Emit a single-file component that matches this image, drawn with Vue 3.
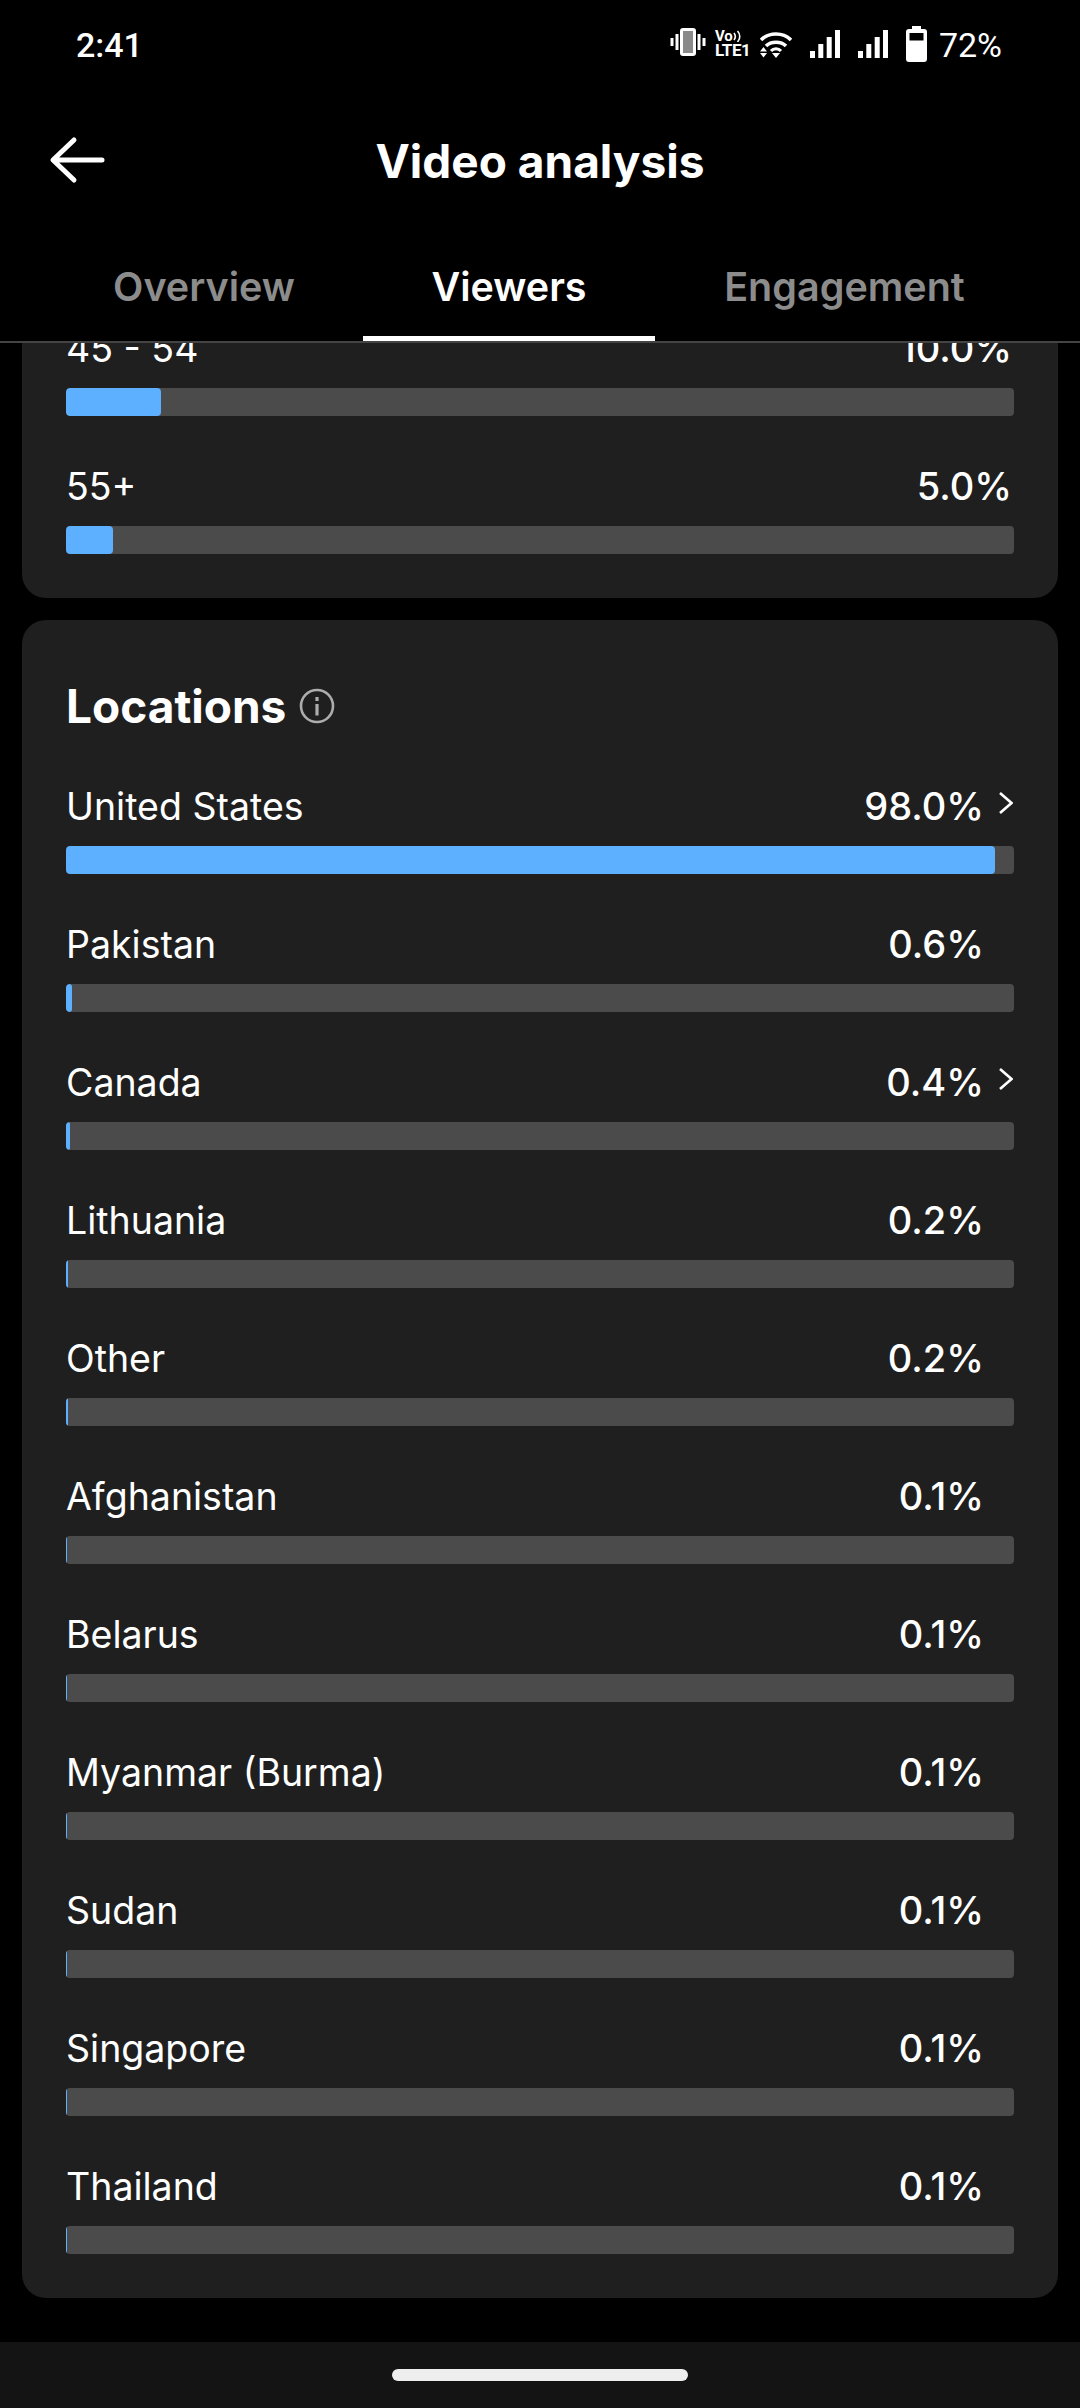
<template>
  <div class="screen">
    <div class="status">
      <span class="time">2:41</span>
      <div class="status-icons">
        <svg class="ic-vib" viewBox="0 0 36 28" width="36" height="28">
          <rect x="11.500" y="1.500" width="13" height="25" rx="1.500" fill="#8a8a8a" stroke="#fff" stroke-width="3" />
          <path d="M7 6v16M2 10v8M29 6v16M34 10v8" stroke="#fff" stroke-width="3" fill="none" />
        </svg>
        <div class="volte">
          <div class="vo">Vo<svg viewBox="0 0 9 12" width="9" height="12"><path d="M1 3c1.500 2 1.500 5 0 7M4.500 1c3 3 3 8 0 11" stroke="#fff" stroke-width="1.600" fill="none" /></svg></div>
          <div class="lte">LTE1</div>
        </div>
        <svg class="ic-wifi" viewBox="0 0 32 27" width="32" height="27">
          <path d="M1 9C9 1 23 1 31 9" stroke="#fff" stroke-width="3.600" fill="none" />
          <path d="M6 15C11 10 21 10 26 15" stroke="#fff" stroke-width="3.600" fill="none" />
          <path d="M11 20C13.500 17 18.500 17 21 20" stroke="#fff" stroke-width="3" fill="none" />
          <path d="M0 20.500h7L3.500 16zM0 22h7l-3.500 4.500zM12 22h8l-4 5z" fill="#fff" />
        </svg>
        <svg class="ic-sig" viewBox="0 0 30 28" width="30" height="28">
          <path d="M0 21h5v7H0zM8.300 14h5v14h-5zM16.700 7h5v21h-5zM25 0h5v28h-5z" fill="#fff" />
        </svg>
        <svg class="ic-sig" viewBox="0 0 30 28" width="30" height="28">
          <path d="M0 21h5v7H0zM8.300 14h5v14h-5zM16.700 7h5v21h-5zM25 0h5v28h-5z" fill="#fff" />
        </svg>
        <svg class="ic-bat" viewBox="0 0 21 36" width="21" height="36">
          <path d="M6 0h9v3h3a3 3 0 0 1 3 3v27a3 3 0 0 1-3 3H3a3 3 0 0 1-3-3V6a3 3 0 0 1 3-3h3z" fill="#fff" />
          <rect x="3.500" y="7" width="14" height="7.500" fill="#000" />
        </svg>
        <span class="batt">72%</span>
      </div>
    </div>

    <div class="header">
      <svg class="back" viewBox="0 0 56 48" width="56" height="48">
        <path d="M53 24H5M25 4 4 24l21 20" stroke="#fff" stroke-width="5" stroke-linecap="round" stroke-linejoin="round" fill="none" />
      </svg>
      <h1>Video analysis</h1>
    </div>

    <div class="tabs">
      <div v-for="t in tabs" :key="t.name" class="tab" :class="[t.cls, { active: t.name === 'Viewers' }]">{{ t.name }}</div>
    </div>

    <div class="scroll">
      <div class="scroll-inner">
        <div class="card card-age">
          <div v-for="row in ages" :key="row.label" class="row">
            <div class="row-text">
              <span class="label">{{ row.label }}</span>
              <span class="pct">{{ row.value }}</span>
            </div>
            <div class="track"><div class="fill" :style="{ width: row.fill + '%' }"></div></div>
          </div>
        </div>

        <div class="card card-loc">
          <div class="title-row">
            <h2>Locations</h2>
            <svg viewBox="0 0 36 36" width="36" height="36">
              <circle cx="18" cy="18" r="16" stroke="#adadad" stroke-width="2.600" fill="none" />
              <rect x="16.400" y="9" width="3.200" height="4" fill="#adadad" />
              <rect x="16.400" y="16" width="3.200" height="11.500" fill="#adadad" />
            </svg>
          </div>
          <div v-for="row in locations" :key="row.label" class="row">
            <div class="row-text">
              <span class="label">{{ row.label }}</span>
              <span class="pct loc-pct">{{ row.value }}</span>
              <svg v-if="row.more" class="chev" viewBox="0 0 14 24" width="14" height="24">
                <path d="M1 2 12.500 12 1 22" stroke="#fff" stroke-width="2.600" fill="none" />
              </svg>
            </div>
            <div class="track">
              <div class="fill" :class="{ thin: row.fill < 0.3 }" :style="{ width: row.fill + '%' }"></div>
            </div>
          </div>
        </div>
      </div>
    </div>

    <div class="navbar"><div class="pill"></div></div>
  </div>
</template>

<script setup>
const tabs = [
  { name: 'Overview', cls: 'tab-a' },
  { name: 'Viewers', cls: 'tab-b' },
  { name: 'Engagement', cls: 'tab-c' },
];

const ages = [
  { label: '45 - 54', value: '10.0%', fill: 10 },
  { label: '55+', value: '5.0%', fill: 5 },
];

const locations = [
  { label: 'United States', value: '98.0%', fill: 98, more: true },
  { label: 'Pakistan', value: '0.6%', fill: 0.6 },
  { label: 'Canada', value: '0.4%', fill: 0.4, more: true },
  { label: 'Lithuania', value: '0.2%', fill: 0.2 },
  { label: 'Other', value: '0.2%', fill: 0.2 },
  { label: 'Afghanistan', value: '0.1%', fill: 0.1 },
  { label: 'Belarus', value: '0.1%', fill: 0.1 },
  { label: 'Myanmar (Burma)', value: '0.1%', fill: 0.1 },
  { label: 'Sudan', value: '0.1%', fill: 0.1 },
  { label: 'Singapore', value: '0.1%', fill: 0.1 },
  { label: 'Thailand', value: '0.1%', fill: 0.1 },
];
</script>

<style scoped>
.screen {
  width: 1080px;
  height: 2408px;
  background: #000;
  color: #fff;
  display: flex;
  flex-direction: column;
  overflow: hidden;
  font-family: Inter, Roboto, "Liberation Sans", sans-serif;
}

.status {
  height: 88px;
  flex: none;
  display: flex;
  align-items: center;
  justify-content: space-between;
  padding: 0 78px 0 76px;
  font-family: Roboto, sans-serif;
  box-sizing: border-box;
}

.time {
  font-size: 34px;
  font-weight: 500;
  margin-top: 2px;
}

.status-icons {
  display: flex;
  align-items: center;
}

.ic-vib { margin-right: 9px; margin-top: -4px; }
.ic-wifi { margin-left: 10px; margin-right: 18px; }
.ic-sig { margin-right: 18px; }
.ic-bat { margin-right: 12px; }

.volte {
  width: 35px;
  font-weight: 700;
}

.vo {
  font-size: 15px;
  line-height: 12px;
  display: flex;
  align-items: center;
}

.lte {
  font-size: 17px;
  line-height: 15px;
  margin-top: 1px;
  letter-spacing: -0.4px;
}

.batt {
  font-size: 34px;
  font-weight: 400;
  margin-top: 2px;
}

.header {
  height: 146px;
  flex: none;
  display: flex;
  align-items: center;
  justify-content: center;
  position: relative;
}

.back {
  position: absolute;
  left: 49px;
  top: 48px;
}

.header h1 {
  margin: 0;
  font-size: 46px;
  font-weight: 700;
}

.tabs {
  height: 109px;
  flex: none;
  box-sizing: border-box;
  border-bottom: 2px solid #444;
  display: flex;
  align-items: flex-end;
}

.tab {
  height: 84px;
  box-sizing: border-box;
  font-size: 39.500px;
  font-weight: 600;
  color: #8c8c8c;
  text-align: center;
  line-height: 60px;
}

.tab-a { width: 363px; padding-left: 45px; }
.tab-b { width: 292px; }
.tab-c { width: 425px; padding-right: 46px; }

.tab.active {
  color: #fff;
  border-bottom: 5px solid #fff;
}

.scroll {
  flex: 1;
  min-height: 0;
  overflow: hidden;
}

.scroll-inner {
  margin-top: -65px;
  padding: 0 22px;
}

.card {
  background: #1f1f1f;
  border-radius: 24px;
  padding: 0 44px 44px;
}

.card-loc {
  margin-top: 22px;
  padding-top: 56px;
}

.title-row {
  height: 60px;
  display: flex;
  align-items: center;
  gap: 13px;
}

.title-row h2 {
  margin: 0;
  font-size: 46px;
  font-weight: 700;
}

.row {
  height: 138px;
  display: flex;
  flex-direction: column;
  justify-content: flex-end;
}

.row-text {
  display: flex;
  align-items: center;
  margin-bottom: 14px;
  height: 52px;
  position: relative;
  font-size: 37.500px;
}

.label {
  flex: 1;
}

.pct {
  font-weight: 500;
  font-size: 38px;
  margin-right: 2px;
}

.loc-pct {
  margin-right: 30px;
}

.chev {
  position: absolute;
  right: 1px;
  top: 11px;
}

.track {
  height: 28px;
  border-radius: 4px;
  background: #4b4b4b;
  overflow: hidden;
}

.fill {
  height: 100%;
  background: #5cb0ff;
  border-radius: 4px;
}

.fill.thin {
  border-radius: 0;
}

.navbar {
  height: 66px;
  flex: none;
  background: #141414;
  display: flex;
  justify-content: center;
  padding-top: 27px;
  box-sizing: border-box;
}

.pill {
  width: 296px;
  height: 12px;
  border-radius: 6px;
  background: #eee;
}
</style>
